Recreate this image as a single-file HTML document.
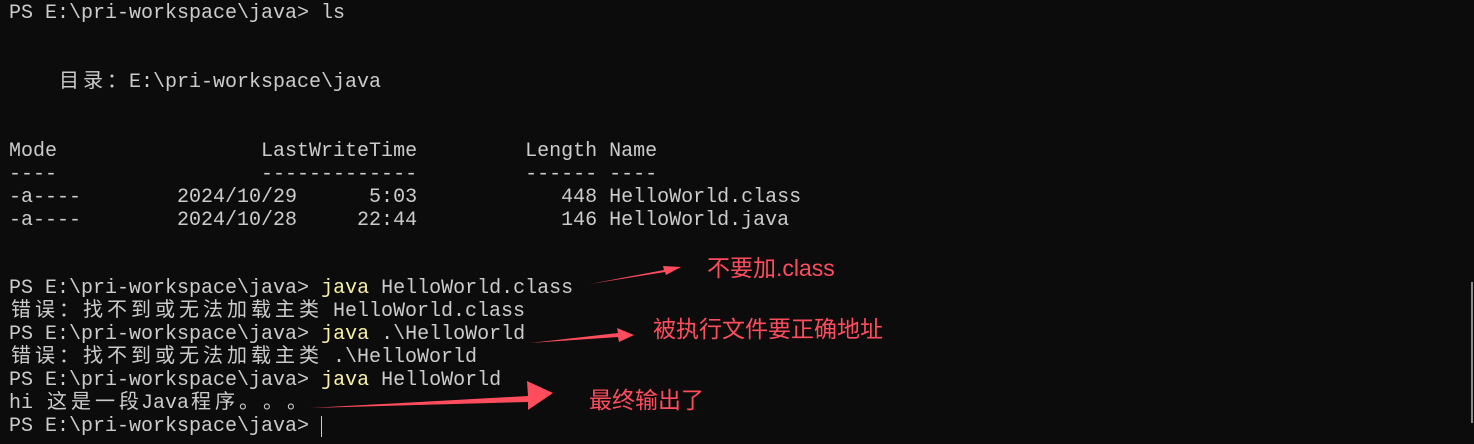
<!DOCTYPE html>
<html><head><meta charset="utf-8"><style>
html,body{margin:0;padding:0;background:#0c0c0c;width:1474px;height:444px;overflow:hidden}
pre{position:absolute;left:9px;top:3px;margin:0;font-family:"Liberation Mono","Noto Sans CJK SC",monospace;font-size:20px;line-height:22.95px;color:#cccccc;white-space:pre}
.c{display:inline-block;width:24px;text-align:center}
.y{color:#f9f1a5}
.a{position:absolute;color:#ff4d5e;font-family:"Liberation Sans","Noto Sans CJK SC",sans-serif;font-size:23px;line-height:26px;white-space:nowrap}
</style></head><body>
<pre>PS E:\pri-workspace\java&gt; ls


    <span class="c">目</span><span class="c">录</span><span class="c">：</span>E:\pri-workspace\java


Mode                 LastWriteTime         Length Name
----                 -------------         ------ ----
-a----        2024/10/29      5:03            448 HelloWorld.class
-a----        2024/10/28     22:44            146 HelloWorld.java


PS E:\pri-workspace\java&gt; <span class="y">java</span> HelloWorld.class
<span class="c">错</span><span class="c">误</span><span class="c">：</span><span class="c">找</span><span class="c">不</span><span class="c">到</span><span class="c">或</span><span class="c">无</span><span class="c">法</span><span class="c">加</span><span class="c">载</span><span class="c">主</span><span class="c">类</span> HelloWorld.class
PS E:\pri-workspace\java&gt; <span class="y">java</span> .\HelloWorld
<span class="c">错</span><span class="c">误</span><span class="c">：</span><span class="c">找</span><span class="c">不</span><span class="c">到</span><span class="c">或</span><span class="c">无</span><span class="c">法</span><span class="c">加</span><span class="c">载</span><span class="c">主</span><span class="c">类</span> .\HelloWorld
PS E:\pri-workspace\java&gt; <span class="y">java</span> HelloWorld
hi <span class="c">这</span><span class="c">是</span><span class="c">一</span><span class="c">段</span>Java<span class="c">程</span><span class="c">序</span><span class="c">。</span><span class="c">。</span><span class="c">。</span>
PS E:\pri-workspace\java&gt; </pre>
<div style="position:absolute;left:321px;top:416px;width:1px;height:21px;background:#cccccc"></div>
<div style="position:absolute;left:1471px;top:282px;width:2px;height:141px;background:#8a8a8a"></div>
<svg width="1474" height="444" style="position:absolute;left:0;top:0">
<polygon fill="#ff4d5e" points="590,284 664,270 663,266 681,267 666,275 665,272"/>
<polygon fill="#ff4d5e" points="530,343 618,333 617,328 634,335 619,342 618,337"/>
<polygon fill="#ff4d5e" points="310,408 528,396 527,381 553,393 528,410 528,402"/>
</svg>
<div class="a" style="left:707px;top:255px">不要加.class</div>
<div class="a" style="left:653px;top:316px">被执行文件要正确地址</div>
<div class="a" style="left:589px;top:387px">最终输出了</div>
</body></html>
